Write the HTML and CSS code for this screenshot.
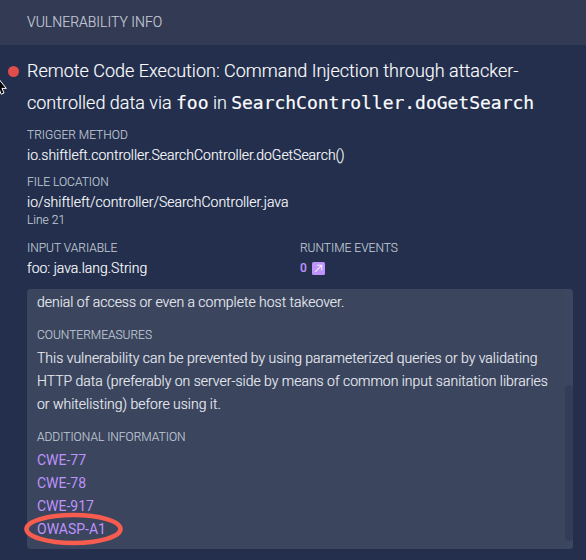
FILE: index.html
```html
<!DOCTYPE html>
<html lang="en">
<head>
<meta charset="utf-8">
<title>Vulnerability Info</title>
<link rel="stylesheet" href="styles.css">
</head>
<body>
<header class="topbar">VULNERABILITY INFO</header>
<main class="content">
  <h1 class="title"><span class="severity"></span>Remote Code Execution: Command Injection through attacker-<br>controlled data via <code>foo</code> in <code>SearchController.doGetSearch</code></h1>
  <section class="field">
    <h2 class="label">TRIGGER METHOD</h2>
    <p class="value">io.shiftleft.controller.SearchController.doGetSearch()</p>
  </section>
  <section class="field file">
    <h2 class="label">FILE LOCATION</h2>
    <p class="value">io/shiftleft/controller/SearchController.java</p>
    <p class="line">Line 21</p>
  </section>
  <div class="columns">
    <section>
      <h2 class="label">INPUT VARIABLE</h2>
      <p class="value">foo: java.lang.String</p>
    </section>
    <section>
      <h2 class="label">RUNTIME EVENTS</h2>
      <p class="value events">0
        <svg class="open" width="13" height="13" viewBox="0 0 13 13"><rect width="13" height="13" rx="1.5" fill="#be93fb"/><path d="M3.2 9.8 9.6 3.4M4.8 3.3H9.7V8.2" fill="none" stroke="#f3eaff" stroke-width="1.1"/></svg>
      </p>
    </section>
  </div>
  <article class="panel">
    <p class="text">denial of access or even a complete host takeover.</p>
    <h2 class="label counter">COUNTERMEASURES</h2>
    <p class="text">This vulnerability can be prevented by using parameterized queries or by validating<br>HTTP data (preferably on server-side by means of common input sanitation libraries<br>or whitelisting) before using it.</p>
    <h2 class="label additional">ADDITIONAL INFORMATION</h2>
    <ul class="links">
      <li>CWE-77</li>
      <li>CWE-78</li>
      <li>CWE-917</li>
      <li class="marked">OWASP-A1<svg class="ring" width="100" height="34" viewBox="0 0 100 34"><ellipse cx="49.5" cy="17" rx="47" ry="14" fill="none" stroke="#f85c4f" stroke-width="4.6"/></svg></li>
    </ul>
    <div class="track"><div class="thumb"></div></div>
  </article>
</main>
<svg class="cursor" width="8" height="18" viewBox="0 0 8 18"><path d="M-4 -3.5V13L-.8 10.2 1.2 15.2 4 14 2 9.4H6.3Z" fill="#050608" stroke="#fff" stroke-width="1"/></svg>
</body>
</html>
```

FILE: styles.css
```css
* { box-sizing: border-box; }
body {
  margin: 0;
  width: 586px;
  height: 560px;
  overflow: hidden;
  position: relative;
  background: #232f4c;
  color: #fbfcff;
  font-family: Roboto, "Open Sans", sans-serif;
  font-weight: 300;
  -webkit-text-stroke: 0.15px currentColor;
}
h1, h2, p, ul { margin: 0; padding: 0; font-weight: 300; white-space: nowrap; }
.topbar {
  height: 45px;
  padding-left: 27px;
  background: #333a54;
  color: #c6cad6;
  font-size: 14px;
  line-height: 45px;
}
.content { padding: 10px 13px 0 27px; }
.title { position: relative; font-size: 18px; line-height: 32px; }
.title code {
  font-family: "DejaVu Sans Mono", monospace;
  font-size: 18px;
  line-height: 1;
  letter-spacing: -0.02px;
  -webkit-text-stroke: 0.2px currentColor;
}
.severity {
  position: absolute;
  left: -19px;
  top: 11px;
  width: 11px;
  height: 11px;
  border-radius: 50%;
  background: #e14c4c;
}
.label { color: #bfc5d1; font-size: 12px; line-height: 16px; }
.value { font-size: 14px; line-height: 20px; margin: 2px 0 1px; letter-spacing: -0.01px; }
.field { margin-top: 8px; }
.file { margin-top: 9px; }
.line { color: #bfc5d1; font-size: 12px; line-height: 14px; }
.columns { display: grid; grid-template-columns: 273px 1fr; margin-top: 13px; }
.events { display: flex; align-items: center; gap: 5px; color: #be93fb; font-size: 12px; font-weight: 500; }
.panel {
  position: relative;
  height: 260px;
  margin-top: 10px;
  padding: 2px 10px 0;
  border-radius: 4px;
  background: #3b455e;
}
.text { color: #e9ecf2; font-size: 14px; line-height: 23px; letter-spacing: -0.01px; }
.counter { margin: 13px 0 4px; }
.additional { margin: 13px 0 4px; }
.links { list-style: none; color: #be93fb; font-size: 14px; font-weight: 400; line-height: 23px; -webkit-text-stroke: 0; }
.marked { position: relative; width: max-content; }
.ring { position: absolute; left: -13px; top: -6px; }
.track { position: absolute; right: 0; top: 0; width: 8px; height: 100%; background: #3d465f; border-radius: 0 4px 4px 0; }
.thumb { margin-top: 96px; height: 156px; border-radius: 4px; background: #353d56; }
.cursor { position: absolute; left: 0; top: 79px; }
```
